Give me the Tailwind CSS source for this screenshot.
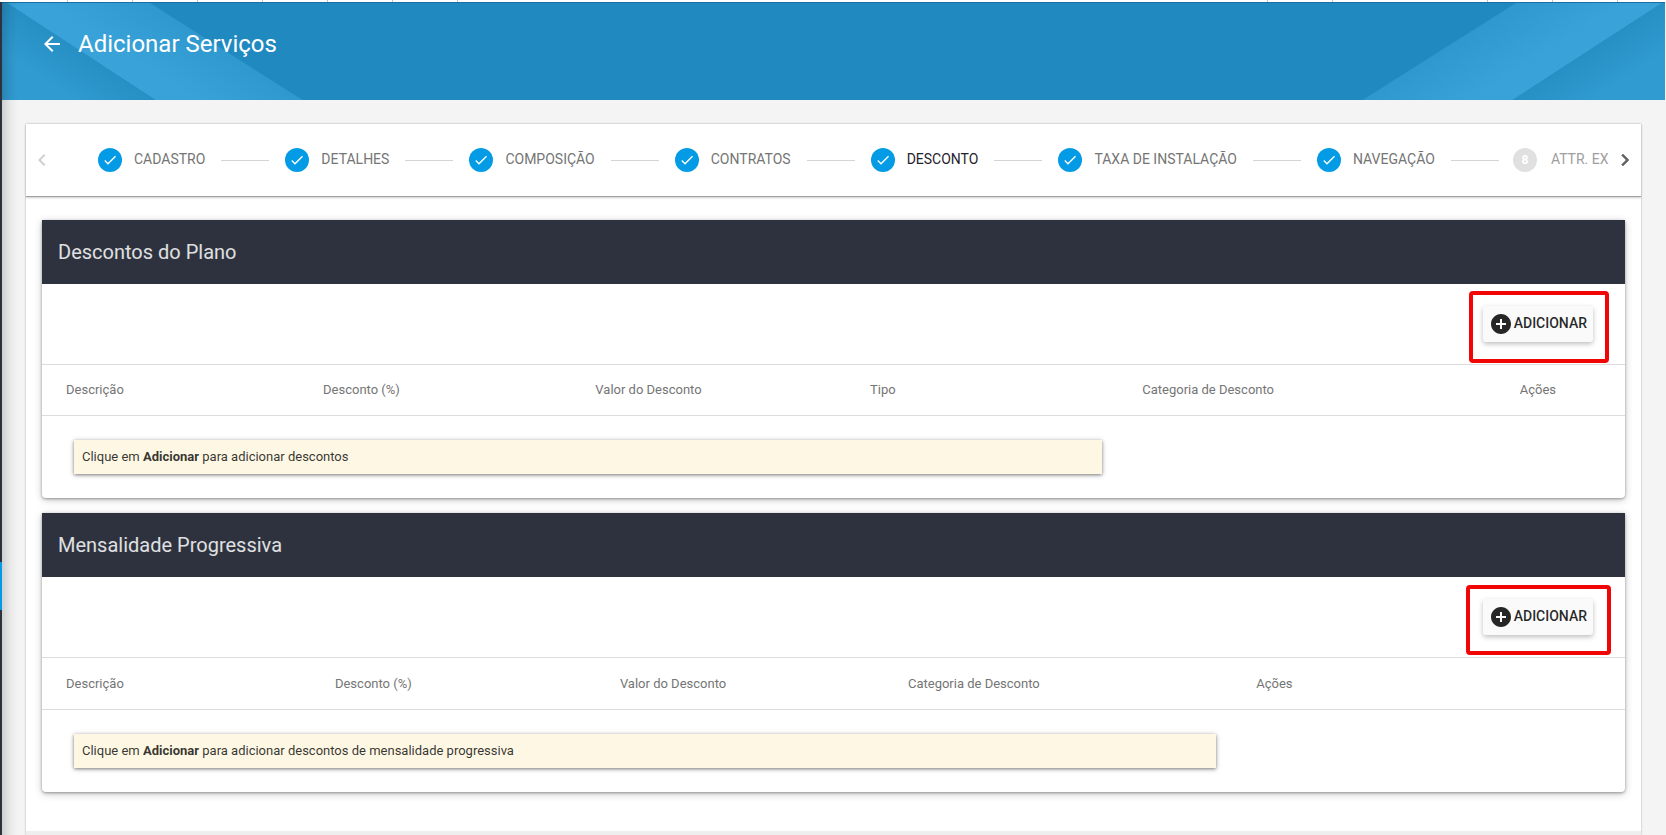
<!DOCTYPE html>
<html lang="pt-BR">
<head>
<meta charset="utf-8">
<meta name="viewport" content="width=device-width, initial-scale=1">
<title>Adicionar Serviços</title>
<script src="https://cdn.jsdelivr.net/npm/@tailwindcss/browser@4"></script>
</head>
<body class="flex min-h-screen flex-col overflow-x-hidden bg-[#f4f4f4] font-['Roboto',sans-serif] text-[13px] text-black/80">
<svg width="0" height="0" class="hidden" aria-hidden="true">
  <symbol id="check" viewBox="0 0 24 24"><path fill="currentColor" d="M9 16.17L4.83 12l-1.42 1.41L9 19 21 7l-1.41-1.41z"/></symbol>
  <symbol id="plus" viewBox="0 0 24 24"><path fill="currentColor" d="M12 2C6.48 2 2 6.48 2 12s4.48 10 10 10 10-4.48 10-10S17.52 2 12 2zm5 11h-4v4h-2v-4H7v-2h4V7h2v4h4v2z"/></symbol>
</svg>

<!-- lower edge of the browser's bookmark bar -->
<div class="flex h-[2px] shrink-0 justify-between bg-white">
  <div class="w-[460px] bg-[repeating-linear-gradient(90deg,transparent_0px,transparent_64px,#c4c4c4_64px,#c4c4c4_65px)] bg-[position:3px_0]"></div>
  <div class="flex gap-16 pr-12"><span class="w-px bg-[#c4c4c4]"></span><span class="mr-[90px] w-px bg-[#c4c4c4]"></span><span class="w-px bg-[#c4c4c4]"></span><span class="w-px bg-[#c4c4c4]"></span><span class="w-px bg-[#c4c4c4]"></span></div>
</div>

<div class="relative flex flex-1">
  <!-- collapsed side menu -->
  <nav class="flex w-[2px] shrink-0 flex-col bg-[#2d323e]" aria-label="Menu">
    <span class="mt-[560px] block h-12 bg-[#039be5]"></span>
  </nav>
  <div class="pointer-events-none absolute inset-y-0 left-[2px] z-10 w-4 bg-linear-to-r from-black/15 via-black/5 to-transparent"></div>

  <div class="flex min-w-0 flex-1 flex-col">
    <header class="relative mr-px h-[98px] shrink-0 overflow-hidden border-t border-[#1a6f9c] bg-[#2089bf]">
      <svg class="absolute top-0 left-0" width="304" height="98" viewBox="0 0 304 98" aria-hidden="true">
        <defs>
          <linearGradient id="l1" gradientUnits="userSpaceOnUse" x1="150" y1="0" x2="118" y2="49"><stop offset="0" stop-color="#2f99cf"/><stop offset="1" stop-color="#39a2d8"/></linearGradient>
          <linearGradient id="l2" gradientUnits="userSpaceOnUse" x1="80" y1="49" x2="56" y2="86"><stop offset="0" stop-color="#268fc4"/><stop offset="1" stop-color="#309bd1"/></linearGradient>
        </defs>
        <path d="M5 0H148L302 98H155Z" fill="url(#l1)"/>
        <path d="M0 -3L5 0L155 98H0Z" fill="url(#l2)"/>
      </svg>
      <svg class="absolute top-0 right-0" width="304" height="98" viewBox="0 0 304 98" aria-hidden="true">
        <defs>
          <linearGradient id="r1" gradientUnits="userSpaceOnUse" x1="155" y1="0" x2="187" y2="49"><stop offset="0" stop-color="#2f99cf"/><stop offset="1" stop-color="#39a2d8"/></linearGradient>
          <linearGradient id="r2" gradientUnits="userSpaceOnUse" x1="224" y1="49" x2="248" y2="86"><stop offset="0" stop-color="#268fc4"/><stop offset="1" stop-color="#309bd1"/></linearGradient>
        </defs>
        <path d="M155 0H301L150 98H0Z" fill="url(#r1)"/>
        <path d="M304 -2L301 0L150 98H304Z" fill="url(#r2)"/>
      </svg>
      <div class="relative flex items-center gap-[14px] pt-[25px] pl-[38px] text-white">
        <button type="button" aria-label="Voltar" class="block size-6">
          <svg viewBox="0 0 24 24" class="size-6" aria-hidden="true"><path fill="currentColor" d="M20 11H7.830l5.590-5.590L12 4l-8 8 8 8 1.410-1.410L7.830 13H20v-2z"/></svg>
        </button>
        <h1 class="text-2xl leading-8">Adicionar Serviços</h1>
      </div>
    </header>

    <main class="mt-6 mr-[25px] ml-6 flex-1 bg-white shadow-[0_0_2px_rgba(0,0,0,0.3)]">
      <div class="flex h-[73px] items-center border-b border-[#a0a0a0] shadow-[0_1px_2px_rgba(0,0,0,0.2)]">
        <button type="button" aria-label="Etapas anteriores" disabled class="flex w-8 shrink-0 justify-center text-[#d0d0d0]">
          <svg viewBox="0 0 24 24" class="size-6" aria-hidden="true"><path fill="currentColor" d="M15.410 7.410L14 6l-6 6 6 6 1.410-1.410L10.830 12z"/></svg>
        </button>
        <ol class="flex min-w-0 flex-1 items-center overflow-hidden pl-10 text-sm font-normal whitespace-nowrap text-[#757575]">
          <li class="flex shrink-0 items-center"><button type="button" class="flex items-center gap-3"><span class="flex size-6 items-center justify-center rounded-full bg-[#039be5] text-white"><svg class="size-4"><use href="#check"/></svg></span><span class="pb-0.5">CADASTRO</span></button><span class="mx-4 h-px w-12 bg-[#d4d4d4]"></span></li>
          <li class="flex shrink-0 items-center"><button type="button" class="flex items-center gap-3"><span class="flex size-6 items-center justify-center rounded-full bg-[#039be5] text-white"><svg class="size-4"><use href="#check"/></svg></span><span class="pb-0.5">DETALHES</span></button><span class="mx-4 h-px w-12 bg-[#d4d4d4]"></span></li>
          <li class="flex shrink-0 items-center"><button type="button" class="flex items-center gap-3"><span class="flex size-6 items-center justify-center rounded-full bg-[#039be5] text-white"><svg class="size-4"><use href="#check"/></svg></span><span class="pb-0.5">COMPOSIÇÃO</span></button><span class="mx-4 h-px w-12 bg-[#d4d4d4]"></span></li>
          <li class="flex shrink-0 items-center"><button type="button" class="flex items-center gap-3"><span class="flex size-6 items-center justify-center rounded-full bg-[#039be5] text-white"><svg class="size-4"><use href="#check"/></svg></span><span class="pb-0.5">CONTRATOS</span></button><span class="mx-4 h-px w-12 bg-[#d4d4d4]"></span></li>
          <li class="flex shrink-0 items-center"><button type="button" aria-current="step" class="flex items-center gap-3 text-[#1f232c]"><span class="flex size-6 items-center justify-center rounded-full bg-[#039be5] text-white"><svg class="size-4"><use href="#check"/></svg></span><span class="pb-0.5">DESCONTO</span></button><span class="mx-4 h-px w-12 bg-[#d4d4d4]"></span></li>
          <li class="flex shrink-0 items-center"><button type="button" class="flex items-center gap-3"><span class="flex size-6 items-center justify-center rounded-full bg-[#039be5] text-white"><svg class="size-4"><use href="#check"/></svg></span><span class="pb-0.5">TAXA DE INSTALAÇÃO</span></button><span class="mx-4 h-px w-12 bg-[#d4d4d4]"></span></li>
          <li class="flex shrink-0 items-center"><button type="button" class="flex items-center gap-3"><span class="flex size-6 items-center justify-center rounded-full bg-[#039be5] text-white"><svg class="size-4"><use href="#check"/></svg></span><span class="pb-0.5">NAVEGAÇÃO</span></button><span class="mr-3.5 ml-4 h-px w-12 bg-[#d4d4d4]"></span></li>
          <li class="flex shrink-0 items-center"><button type="button" disabled class="flex items-center gap-3.5 text-[#9e9e9e]"><span class="flex size-6 items-center justify-center rounded-full bg-[#e0e0e0] text-xs font-bold text-white">8</span><span class="pb-0.5">ATTR. EX</span></button></li>
        </ol>
        <button type="button" aria-label="Próximas etapas" class="flex w-8 shrink-0 justify-center text-[#616161]">
          <svg viewBox="0 0 24 24" class="size-6" aria-hidden="true"><path fill="currentColor" stroke="currentColor" stroke-width="0.5" d="M8.590 7.410L10 6l6 6-6 6-1.410-1.410L13.170 12z"/></svg>
        </button>
      </div>

      <div class="flex flex-col gap-[15px] px-4 pt-[23px] pb-[39px]">
        <section class="rounded-b bg-white shadow-[0_1px_3px_rgba(0,0,0,0.35),0_2px_8px_rgba(0,0,0,0.2)]">
          <h2 class="bg-[#2d323e] px-4 text-xl leading-[64px] text-white/85">Descontos do Plano</h2>
          <div class="flex h-20 items-start justify-end pt-[22px] pr-8">
            <div class="relative">
              <button type="button" class="flex h-9 items-center gap-px rounded-[3px] bg-[#fafafa] px-[6px] text-sm font-medium text-black/85 shadow-[0_2px_5px_rgba(0,0,0,0.26)]"><svg class="size-6"><use href="#plus"/></svg><span class="pb-0.5">ADICIONAR</span></button>
              <span class="pointer-events-none absolute -top-[15px] -right-4 -bottom-[21px] -left-[14px] rounded-sm border-4 border-[#f20505]"></span>
            </div>
          </div>
          <table class="w-full table-fixed text-left">
            <colgroup><col class="w-[17.25%]"><col class="w-[17.2%]"><col class="w-[17.35%]"><col class="w-[17.2%]"><col class="w-[23.85%]"><col></colgroup>
            <thead class="border-y border-[#dcdcdc] text-[#757575]">
              <tr class="h-[51px]"><th class="pl-6 font-normal">Descrição</th><th class="pl-2 font-normal">Desconto (%)</th><th class="pl-2 font-normal">Valor do Desconto</th><th class="pl-2 font-normal">Tipo</th><th class="pl-2 font-normal">Categoria de Desconto</th><th class="pl-2 font-normal">Ações</th></tr>
            </thead>
            <tbody>
              <tr><td colspan="4" class="px-8 py-6"><p class="bg-[#fdf7e3] px-2 leading-[34px] shadow-[0_1px_3px_rgba(0,0,0,0.4),0_1px_6px_rgba(0,0,0,0.2)]">Clique em <b class="font-bold">Adicionar</b> para adicionar descontos</p></td></tr>
            </tbody>
          </table>
        </section>

        <section class="rounded-b bg-white shadow-[0_1px_3px_rgba(0,0,0,0.35),0_2px_8px_rgba(0,0,0,0.2)]">
          <h2 class="bg-[#2d323e] px-4 text-xl leading-[64px] text-white/85">Mensalidade Progressiva</h2>
          <div class="flex h-20 items-start justify-end pt-[22px] pr-8">
            <div class="relative">
              <button type="button" class="flex h-9 items-center gap-px rounded-[3px] bg-[#fafafa] px-[6px] text-sm font-medium text-black/85 shadow-[0_2px_5px_rgba(0,0,0,0.26)]"><svg class="size-6"><use href="#plus"/></svg><span class="pb-0.5">ADICIONAR</span></button>
              <span class="pointer-events-none absolute -top-[14px] -right-[18px] -bottom-5 -left-[17px] rounded-sm border-4 border-[#f20505]"></span>
            </div>
          </div>
          <table class="w-full table-fixed text-left">
            <colgroup><col class="w-[18%]"><col class="w-[18%]"><col class="w-[18.2%]"><col class="w-[22%]"><col></colgroup>
            <thead class="border-y border-[#dcdcdc] text-[#757575]">
              <tr class="h-[52px]"><th class="pl-6 font-normal">Descrição</th><th class="pl-2 font-normal">Desconto (%)</th><th class="pl-2 font-normal">Valor do Desconto</th><th class="pl-2 font-normal">Categoria de Desconto</th><th class="pl-2 font-normal">Ações</th></tr>
            </thead>
            <tbody>
              <tr><td colspan="4" class="px-8 py-6"><p class="bg-[#fdf7e3] px-2 leading-[34px] shadow-[0_1px_3px_rgba(0,0,0,0.4),0_1px_6px_rgba(0,0,0,0.2)]">Clique em <b class="font-bold">Adicionar</b> para adicionar descontos de mensalidade progressiva</p></td></tr>
            </tbody>
          </table>
        </section>
      </div>
      <footer class="h-1 bg-[#eeeeee]"></footer>
    </main>
  </div>
</div>
</body>
</html>
